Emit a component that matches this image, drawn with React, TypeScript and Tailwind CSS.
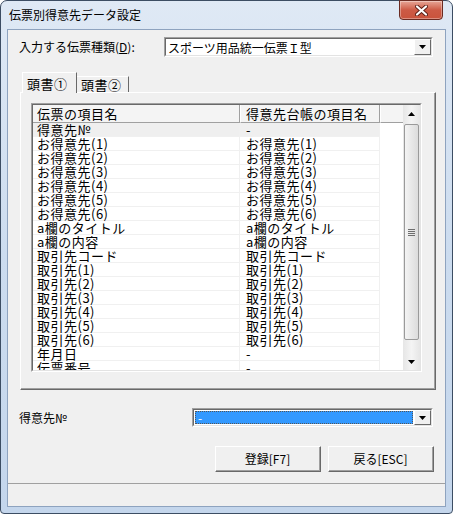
import React from "react";

const jp = "font-['MS_UI_Gothic','Noto_Sans_CJK_JP',sans-serif]";

const rows: [string, string][] = [
  ["得意先№", "-"],
  ["お得意先(1)", "お得意先(1)"],
  ["お得意先(2)", "お得意先(2)"],
  ["お得意先(3)", "お得意先(3)"],
  ["お得意先(4)", "お得意先(4)"],
  ["お得意先(5)", "お得意先(5)"],
  ["お得意先(6)", "お得意先(6)"],
  ["a欄のタイトル", "a欄のタイトル"],
  ["a欄の内容", "a欄の内容"],
  ["取引先コード", "取引先コード"],
  ["取引先(1)", "取引先(1)"],
  ["取引先(2)", "取引先(2)"],
  ["取引先(3)", "取引先(3)"],
  ["取引先(4)", "取引先(4)"],
  ["取引先(5)", "取引先(5)"],
  ["取引先(6)", "取引先(6)"],
  ["年月日", "-"],
  ["伝票番号", "-"],
];

const Arrow = ({ up = false }: { up?: boolean }) => (
  <svg width="7" height="4" viewBox="0 0 7 4">
    <path d={up ? "M3.5 0 L7 4 L0 4 Z" : "M0 0 L7 0 L3.5 4 Z"} fill="#000" />
  </svg>
);

const DropButton = () => (
  <div className="flex h-full w-[17px] items-center justify-center border border-t-white border-l-white border-r-[#696969] border-b-[#696969] bg-[#f0f0f0]">
    <Arrow />
  </div>
);

const Combo = ({ width, children }: { width: string; children: React.ReactNode }) => (
  <div className={`${width} h-full border border-t-[#a0a0a0] border-l-[#a0a0a0] border-b-white border-r-white`}>
    <div className="flex h-full items-stretch border border-t-[#696969] border-l-[#696969] border-b-[#e3e3e3] border-r-[#e3e3e3] bg-white">
      <div className="flex-1 overflow-hidden">{children}</div>
      <DropButton />
    </div>
  </div>
);

const WinButton = ({ label }: { label: string }) => (
  <div className="h-[26px] w-[106px] border border-t-white border-l-white border-r-[#696969] border-b-[#696969]">
    <div className="flex h-full items-center justify-center border-r border-b border-r-[#a0a0a0] border-b-[#a0a0a0] bg-[#f0f0f0] text-[12px]">
      {label}
    </div>
  </div>
);

const ListView = () => (
  <div className="h-[269px] w-[391px] border border-t-[#a0a0a0] border-l-[#a0a0a0] border-b-white border-r-white">
    <div className="flex h-full border border-t-[#696969] border-l-[#696969] border-b-[#e3e3e3] border-r-[#e3e3e3] bg-white">
      <div className="flex-1 overflow-hidden text-[13px] tracking-[0.5px]">
        <div className="flex h-[18px] bg-[#f4f4f4]">
          <div className="w-[207px] border-r border-b border-r-[#a0a0a0] border-b-[#a0a0a0] pl-[4px] leading-[17px]">
            伝票の項目名
          </div>
          <div className="w-[140px] border-l border-r border-b border-l-white border-r-[#a0a0a0] border-b-[#a0a0a0] pl-[5px] leading-[17px]">
            得意先台帳の項目名
          </div>
          <div className="flex-1 border-l border-b border-l-white border-b-[#a0a0a0]" />
        </div>
        {rows.map(([a, b], i) => (
          <div key={i} className="flex h-[14px] leading-[13px]">
            <div className={`w-[207px] border-r border-b border-[#f0f0f0] pl-[4px] ${i === 0 ? "bg-[#efefef]" : ""}`}>{a}</div>
            <div className={`w-[140px] border-r border-b border-[#f0f0f0] pl-[6px] ${i === 0 ? "bg-[#efefef]" : ""}`}>{b}</div>
            <div className="flex-1" />
          </div>
        ))}
      </div>
      <div className="flex w-[17px] flex-col bg-gradient-to-r from-[#e6e6e6] via-[#f4f4f4] to-[#e6e6e6]">
        <div className="flex h-[17px] items-center justify-center">
          <Arrow up />
        </div>
        <div className="mx-px mt-[2px] flex h-[216px] items-center justify-center rounded-[2px] border border-[#9a9a9a] bg-gradient-to-r from-[#f4f4f4] to-[#dcdcdc]">
          <div className="flex flex-col gap-[1px]">
            <div className="h-px w-[7px] bg-[#6e6e6e]" />
            <div className="h-px w-[7px] bg-[#6e6e6e]" />
            <div className="h-px w-[7px] bg-[#6e6e6e]" />
            <div className="h-px w-[7px] bg-[#6e6e6e]" />
          </div>
        </div>
        <div className="flex-1" />
        <div className="flex h-[17px] items-center justify-center">
          <Arrow />
        </div>
      </div>
    </div>
  </div>
);

export default function App() {
  return (
    <div className={`${jp} h-[514px] w-[453px] bg-white text-black`}>
      <div className="flex h-full w-full flex-col rounded-t-[7px] rounded-b-[4px] border border-[#3c4d63] bg-gradient-to-b from-[#dfe9f5] via-[#ccdcef] to-[#c4d6ec]">
        {/* title bar */}
        <div className="flex h-[28px] shrink-0 items-start justify-between pl-[8px] pr-[9px]">
          <span className="mt-[6px] text-[12px] leading-[16px]">伝票別得意先データ設定</span>
          <div className="-mt-px flex h-[20px] w-[44px] items-center justify-center rounded-b-[4px] border border-[#6a2b22] bg-gradient-to-b from-[#e6a596] via-[#cd5a45] to-[#c9533c] shadow-[inset_0_0_0_1px_rgba(255,255,255,0.35)]">
            <svg width="13" height="11" viewBox="0 0 13 11">
              <path d="M2 1.5 L11 9.5 M11 1.5 L2 9.5" stroke="#5a1d15" strokeWidth="4" strokeLinecap="round" />
              <path d="M2 1.5 L11 9.5 M11 1.5 L2 9.5" stroke="#fff" strokeWidth="2.2" strokeLinecap="round" />
            </svg>
          </div>
        </div>
        {/* client */}
        <div className="mx-[6px] mb-[6px] flex flex-1 flex-col border border-[#8ea3bf] bg-[#f0f0f0] text-[12px]">
          <div className="mt-[7px] flex h-[20px] items-center">
            <span className="w-[156px] pl-[11px]">
              入力する伝票種類(<span className="underline">D</span>):
            </span>
            <Combo width="w-[269px]">
              <div className="pl-[2px] leading-[17px]">スポーツ用品統一伝票Ｉ型</div>
            </Combo>
          </div>

          {/* tabs */}
          <div className="ml-[12px] mt-[15px] flex h-[20px] items-end pl-[2px] text-[13px] tracking-[0.5px]">
            <div className="relative z-10 -mb-px h-[21px] w-[55px] border-l border-t border-r border-l-white border-t-white border-r-[#696969] bg-[#f0f0f0] pl-[4px] pt-[1px]">
              頭書①
            </div>
            <div className="h-[16px] w-[52px] border-t border-r border-t-white border-r-[#696969] pl-[4px] leading-[15px]">
              頭書②
            </div>
          </div>
          <div className="ml-[12px] h-[298px] w-[416px] border border-t-white border-l-white border-r-[#696969] border-b-[#696969]">
            <div className="h-full border-r border-b border-r-[#a0a0a0] border-b-[#a0a0a0] pl-[10px] pt-[10px]">
              <ListView />
            </div>
          </div>

          <div className="mt-[18px] flex h-[19px] items-center">
            <span className="w-[184px] pl-[11px]">得意先№</span>
            <Combo width="w-[241px]">
              <div className="m-px flex h-[calc(100%-2px)] items-center border border-dotted border-[#555] bg-[#3399ff] pl-[2px] text-[12px] leading-none text-white">
                -
              </div>
            </Combo>
          </div>

          <div className="mt-[19px] flex justify-end gap-[7px] pr-[11px]">
            <WinButton label="登録[F7]" />
            <WinButton label="戻る[ESC]" />
          </div>

          <div className="mt-[11px] flex-1 border-t border-t-[#a0a0a0]" />
        </div>
      </div>
    </div>
  );
}
